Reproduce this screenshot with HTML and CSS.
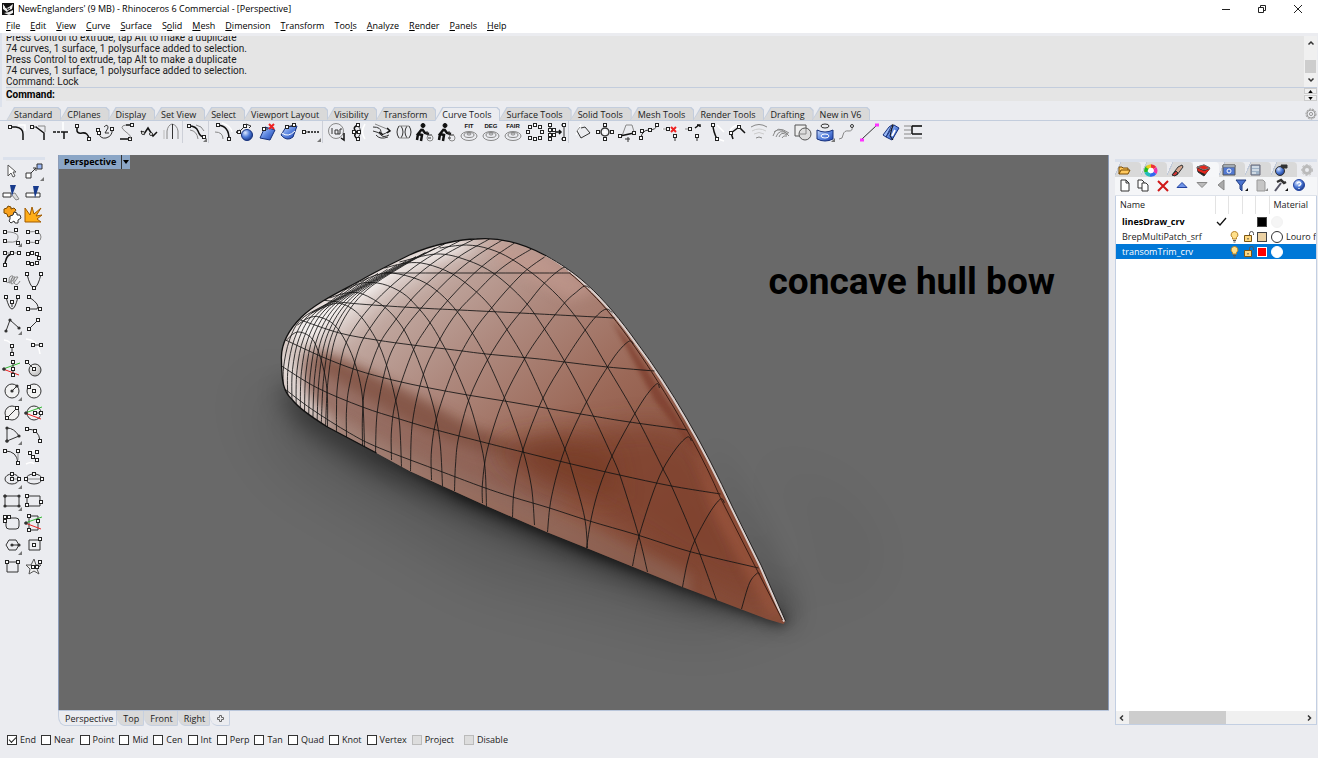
FILE: index.html
```html
<!DOCTYPE html>
<html lang="en">
<head>
<meta charset="utf-8">
<title>NewEnglanders' (9 MB) - Rhinoceros 6 Commercial - [Perspective]</title>
<link rel="stylesheet" href="styles.css">
</head>
<body>
<svg class="defs" aria-hidden="true">
  <defs>
    <marker id="sq" markerUnits="userSpaceOnUse" markerWidth="6" markerHeight="6" refX="3" refY="3"><rect x="1.5" y="1.5" width="3" height="3" fill="#fff" stroke="#222"/></marker>
    <marker id="dot" markerUnits="userSpaceOnUse" markerWidth="4" markerHeight="4" refX="2" refY="2"><circle cx="2" cy="2" r="1.6" fill="#333"/></marker>
    <linearGradient id="blue" x1="0" y1="0" x2="1" y2="1"><stop offset="0" stop-color="#cfe0ff"/><stop offset=".5" stop-color="#5c86e0"/><stop offset="1" stop-color="#1c3fa8"/></linearGradient>
    <radialGradient id="ball" cx=".35" cy=".3" r=".8"><stop offset="0" stop-color="#dbe7ff"/><stop offset=".5" stop-color="#4b79d8"/><stop offset="1" stop-color="#15307c"/></radialGradient>
    <radialGradient id="pearl" cx=".35" cy=".3" r=".8"><stop offset="0" stop-color="#fff"/><stop offset="1" stop-color="#b5b5b5"/></radialGradient>
  </defs>
</svg>

<header class="title-bar">
  <svg class="app-icon" viewBox="0 0 14 14"><rect x="1" y="1" width="12" height="12" fill="#111"/><path d="M2 2l3 4 3-1 4-3-1 5-3 1-2 2-4-3zM3 11l5-1 4-2v3l-4 2z" fill="#eee"/><path d="M4 3l1 3 2 0M6 8l3-2" stroke="#111" fill="none"/></svg>
  <h1>NewEnglanders' (9 MB) - Rhinoceros 6 Commercial - [Perspective]</h1>
  <div class="window-buttons">
    <button aria-label="Minimize"><svg viewBox="0 0 10 10"><path d="M1 5.500h8"/></svg></button>
    <button aria-label="Restore"><svg viewBox="0 0 10 10"><path d="M1.500 3.500h5v5h-5zM3.500 3.500v-2h5v5h-2"/></svg></button>
    <button aria-label="Close"><svg viewBox="0 0 10 10"><path d="M1 1l8 8M9 1l-8 8"/></svg></button>
  </div>
</header>

<nav class="menu-bar">
  <button><u>F</u>ile</button><button><u>E</u>dit</button><button><u>V</u>iew</button><button><u>C</u>urve</button><button><u>S</u>urface</button><button>S<u>o</u>lid</button><button><u>M</u>esh</button><button><u>D</u>imension</button><button><u>T</u>ransform</button><button>Too<u>l</u>s</button><button><u>A</u>nalyze</button><button><u>R</u>ender</button><button><u>P</u>anels</button><button><u>H</u>elp</button>
</nav>

<section class="command">
  <div class="history">
    <div class="history-text">
      <p>Press Control to extrude, tap Alt to make a duplicate</p>
      <p>74 curves, 1 surface, 1 polysurface added to selection.</p>
      <p>Press Control to extrude, tap Alt to make a duplicate</p>
      <p>74 curves, 1 surface, 1 polysurface added to selection.</p>
      <p>Command: Lock</p>
    </div>
    <div class="v-scroll">
      <button aria-label="Scroll up"><svg viewBox="0 0 8 8"><path d="M1.500 5.500L4 3l2.500 2.500"/></svg></button>
      <span class="v-thumb"></span>
      <button aria-label="Scroll down"><svg viewBox="0 0 8 8"><path d="M1.500 2.500L4 5l2.500-2.500"/></svg></button>
    </div>
  </div>
  <div class="prompt">
    <label for="cmd">Command:</label><input id="cmd" type="text">
    <div class="spin"><button aria-label="Previous"><svg viewBox="0 0 6 4"><path d="M0 4l3-4 3 4z"/></svg></button><button aria-label="Next"><svg viewBox="0 0 6 4"><path d="M0 0l3 4 3-4z"/></svg></button></div>
  </div>
</section>

<nav class="tool-tabs">
  <button class="tab">Standard</button><button class="tab">CPlanes</button><button class="tab">Display</button><button class="tab">Set View</button><button class="tab">Select</button><button class="tab">Viewport Layout</button><button class="tab">Visibility</button><button class="tab">Transform</button><button class="tab active">Curve Tools</button><button class="tab">Surface Tools</button><button class="tab">Solid Tools</button><button class="tab">Mesh Tools</button><button class="tab">Render Tools</button><button class="tab">Drafting</button><button class="tab">New in V6</button>
  <button class="gear" aria-label="Options"><svg viewBox="0 0 12 12"><circle cx="6" cy="6" r="5" stroke-dasharray="2 1"/><circle cx="6" cy="6" r="4"/><circle cx="6" cy="6" r="1.600"/></svg></button>
</nav>
<div class="toolbar" id="curve-tools"></div>

<main class="workspace">
  <div class="toolbox" id="toolbox"></div>

  <section class="view-column">
    <div class="viewport">
      <svg class="scene" viewBox="59 155 1050 555" preserveAspectRatio="xMidYMid slice">
        <defs>
          <clipPath id="hull-clip"><path d="M282 360C281 345 288 331 302 317C320 300 345 290 367 277C385 267 400 260 410 255C425 248 437 245 447 243C460 240 468 239 477 239C500 237 525 244 547 256C560 263 575 273 587 284C605 300 622 321 637 342C655 366 672 392 687 418C704 447 719 477 733 507C745 531 755 552 762 566L786 621L784 624L767 619L683 587L587 548L547 532L487 506L410 471L377 453L328 427C312 417 299 408 293 400C284 392 282 382 282 360Z"/></clipPath>
          <linearGradient id="hull-base" gradientUnits="userSpaceOnUse" x1="400" y1="270" x2="640" y2="560"><stop offset="0" stop-color="#c6b1aa"/><stop offset=".3" stop-color="#ae897e"/><stop offset=".6" stop-color="#9b6857"/><stop offset="1" stop-color="#864d3a"/></linearGradient>
          <filter id="b2" x="-20%" y="-20%" width="140%" height="140%"><feGaussianBlur stdDeviation="2"/></filter>
          <filter id="b5" x="-30%" y="-30%" width="160%" height="160%"><feGaussianBlur stdDeviation="6"/></filter>
          <filter id="b12" x="-40%" y="-40%" width="180%" height="180%"><feGaussianBlur stdDeviation="13"/></filter>
          <filter id="b30" x="-50%" y="-80%" width="200%" height="260%"><feGaussianBlur stdDeviation="28"/></filter>
        </defs>
        <rect x="-500" y="-500" width="2400" height="2000" fill="#696969"/>
        <path d="M250 390L300 400L560 520L800 610L870 560L760 460L850 520L830 590L700 630L480 575L290 465Z" fill="#000" opacity=".14" filter="url(#b30)"/>
        <path d="M278 390L300 385L420 440L600 520L788 612L780 624L690 602L580 562L470 516L370 470L300 425Z" fill="#000" opacity=".45" filter="url(#b12)"/>
        <path d="M370 445L600 540L788 618L782 625L590 554L460 499Z" fill="#000" opacity=".6" filter="url(#b5)"/>
        <path d="M710 440L790 590L796 624L780 620Z" fill="#000" opacity=".2" filter="url(#b12)"/>
        <g clip-path="url(#hull-clip)">
          <rect x="270" y="230" width="530" height="400" fill="url(#hull-base)"/>
          <path d="M480 236L550 258L600 290L570 300L500 262Z" fill="#c39a8f" opacity=".6" filter="url(#b5)"/>
          <path d="M275 372L285 330L360 275L460 234L500 238L450 258L385 295L340 335L310 345Z" fill="#efe9e7" opacity=".8" filter="url(#b12)"/>
          <path d="M285 338L300 318L370 275L450 240L475 245L400 272L345 308L312 340Z" fill="#fff" opacity=".7" filter="url(#b5)"/>
          <path d="M305 352L345 362L420 402L470 432L510 444L560 440L570 500L540 520L440 475L340 420L300 395Z" fill="#8b6154" opacity=".7" filter="url(#b5)"/>
          <path d="M312 350L335 356L375 374L430 403L470 425L510 442L520 458L470 448L425 430L370 400L320 370Z" fill="#7a4837" opacity=".6" filter="url(#b5)"/>
          <path d="M495 446L550 436L625 426L660 424L700 440L735 520L775 610L700 575L610 520L530 480Z" fill="#7f432d" opacity=".8" filter="url(#b12)"/>
          <path d="M500 448L560 440L610 450L620 500L560 480Z" fill="#70351d" opacity=".5" filter="url(#b12)"/>
          <path d="M275 375L330 412L400 445L480 480L560 514L640 550L690 575L690 600L590 560L480 515L380 465L275 410Z" fill="#937469" opacity=".45" filter="url(#b5)"/>
          <path d="M275 350L292 360L312 400L335 430L285 405Z" fill="#f0eceb" opacity=".75" filter="url(#b5)"/>
          <path d="M612 320L632 345L675 412L700 455L690 445L655 400Z" fill="#7c3b29" opacity=".7" filter="url(#b2)"/>
          <path d="M690 435L785 618L770 612L715 515Z" fill="#a65b43" opacity=".6" filter="url(#b5)"/>
          <path d="M540 250C560 260 575 272 587 284C605 300 622 321 637 342C655 366 672 392 687 418C704 447 719 477 733 507L762 566L786 621" fill="none" stroke="#d9cecb" stroke-width="5"/>
          <path id="isocurves" fill="none" stroke="#141414" stroke-width=".85"/>
        </g>
        <path d="M377 453L328 427C312 417 299 408 293 400C284 392 282 382 282 360C281 345 288 331 302 317C320 300 345 290 367 277C385 267 400 260 410 255C425 248 437 245 447 243C460 240 468 239 477 239C500 237 525 244 547 256" fill="none" stroke="#101010" stroke-width="1.300"/>
        <path d="M547 256C560 263 575 273 587 284C605 300 622 321 637 342C655 366 672 392 687 418C704 447 719 477 733 507L762 566L786 621" fill="none" stroke="#222" stroke-width="1"/>
        <path d="M570 273C583 283 602 303 610 313C628 335 646 362 656 378C680 415 705 460 721 498L758 571L783 620" fill="none" stroke="#3c1c12" stroke-width="1"/>
        <text class="caption" x="769" y="294">concave hull bow</text>
      </svg>
      <div class="view-title"><span>Perspective</span><button aria-label="Viewport menu"><svg viewBox="0 0 6 4"><path d="M0 0h6L3 4z"/></svg></button></div>
    </div>
    <nav class="view-tabs"><button class="active">Perspective</button><button>Top</button><button>Front</button><button>Right</button><button class="add" aria-label="New viewport"><svg viewBox="0 0 9 9"><path d="M3.500 1.500h2v2h2v2h-2v2h-2v-2h-2v-2h2z"/></svg></button></nav>
  </section>

  <aside class="panel">
    <nav class="panel-tabs" id="panel-tabs"></nav>
    <div class="panel-tools" id="panel-tools"></div>
    <div class="layers">
      <table>
        <colgroup><col class="c-name"><col class="c-a"><col class="c-b"><col class="c-a"><col class="c-b"><col></colgroup>
        <thead><tr><th>Name</th><th></th><th></th><th></th><th></th><th>Material</th></tr></thead>
        <tbody>
          <tr class="current"><td>linesDraw_crv</td><td><svg viewBox="0 0 13 13"><path d="M2 7l3 3 6-7" fill="none" stroke="#111" stroke-width="1.300"/></svg></td><td></td><td></td><td><i class="swatch black"></i></td><td><i class="mat faint"></i></td></tr>
          <tr><td>BrepMultiPatch_srf</td><td></td><td><svg viewBox="0 0 13 13"><use href="#bulb"/></svg></td><td><svg viewBox="0 0 13 13"><use href="#lock"/></svg></td><td><i class="swatch tan"></i></td><td><i class="mat"></i><span>Louro f</span></td></tr>
          <tr class="selected"><td>transomTrim_crv</td><td></td><td><svg viewBox="0 0 13 13"><use href="#bulb"/></svg></td><td><svg viewBox="0 0 13 13"><use href="#lock"/></svg></td><td><i class="swatch red"></i></td><td><i class="mat plain"></i></td></tr>
        </tbody>
      </table>
      <svg class="defs"><defs>
        <g id="bulb"><path d="M6.500 1.500a3.300 3.300 0 0 1 2 6v1.500h-4V7.500a3.300 3.300 0 0 1 2-6z" fill="#ffe08a" stroke="#b58125"/><path d="M5 10.500h3M5.500 12h2" stroke="#555"/></g>
        <g id="lock"><path d="M2.500 5.500h7v6h-7z" fill="#ffd880" stroke="#7a5512"/><path d="M7.500 5V3.500a2 2 0 0 1 4 0V5" fill="none" stroke="#555"/><path d="M5.500 8h1v1.500h-1z" fill="#333"/></g>
      </defs></svg>
      <div class="h-scroll">
        <button aria-label="Scroll left"><svg viewBox="0 0 8 8"><path d="M5 1.500L2.500 4 5 6.500"/></svg></button>
        <span class="h-track"><span class="h-thumb"></span></span>
        <button aria-label="Scroll right"><svg viewBox="0 0 8 8"><path d="M3 1.500L5.500 4 3 6.500"/></svg></button>
      </div>
    </div>
  </aside>
</main>

<footer class="osnap">
  <label><input type="checkbox" checked>End</label><label><input type="checkbox">Near</label><label><input type="checkbox">Point</label><label><input type="checkbox">Mid</label><label><input type="checkbox">Cen</label><label><input type="checkbox">Int</label><label><input type="checkbox">Perp</label><label><input type="checkbox">Tan</label><label><input type="checkbox">Quad</label><label><input type="checkbox">Knot</label><label><input type="checkbox">Vertex</label><label class="wide"><input type="checkbox" disabled>Project</label><label class="wide"><input type="checkbox" disabled>Disable</label>
</footer>
<script src="app.js"></script>
</body>
</html>
```
FILE: styles.css
```css
* { box-sizing: border-box; }
html, body { height: 100%; }
body {
  margin: 0;
  display: flex;
  flex-direction: column;
  background: #ebecf0;
  color: #1b1b1b;
  font: 9px/12px "Open Sans", "Noto Sans", sans-serif;
  overflow: hidden;
}
button { font: inherit; color: inherit; background: none; border: 0; padding: 0; margin: 0; white-space: nowrap; }
svg { display: block; }
p, h1 { margin: 0; font: inherit; }
.defs { position: absolute; width: 0; height: 0; }

.title-bar { display: flex; align-items: center; height: 18px; background: #fff; padding: 0 2px 0 1px; }
.app-icon { width: 14px; height: 14px; margin-right: 3px; }
.title-bar h1 { flex: 1; color: #000; }
.window-buttons { display: flex; }
.window-buttons button { width: 36px; height: 16px; display: grid; place-items: center; }
.window-buttons svg { width: 10px; height: 10px; fill: none; stroke: #222; }

.menu-bar { display: flex; gap: 10px; height: 15px; padding: 1px 6px 0; background: #fff; color: #000; }
.menu-bar u { text-underline-offset: 1px; }

.command { padding: 3px 1px 6px 4px; border-left: 2px solid #dde2ec; font-family: Roboto, "Noto Sans", sans-serif; font-size: 10px; }
.history { display: flex; height: 51px; background: #e5e5e5; overflow: hidden; align-items: flex-end; }
.history-text { flex: 1; line-height: 11px; }
.v-scroll { width: 13px; height: 100%; background: #f0f0f0; display: flex; flex-direction: column; justify-content: space-between; align-items: center; padding: 3px 0; }
.v-scroll svg, .h-scroll svg { width: 8px; height: 8px; fill: none; stroke: #333; stroke-width: 1.5; }
.v-thumb { width: 11px; height: 13px; background: #cdcdcd; margin-top: 10px; }
.prompt { display: flex; height: 14px; background: #e5e5e5; border-top: 1px solid #c3cddd; align-items: center; font-weight: 700; color: #000; }
.prompt input { flex: 1; min-width: 0; border: 0; background: none; font: inherit; padding: 0 4px; height: 12px; outline: 0; }
.spin { width: 13px; display: flex; flex-direction: column; gap: 1px; background: #f0f0f0; }
.spin button { height: 6px; border: 1px solid #ccc; display: grid; place-items: center; }
.spin svg { width: 5px; height: 3px; }

.tool-tabs { display: flex; height: 14px; padding: 0 1px 0 6px; border-bottom: 1px solid #c3cddd; }
.tab { position: relative; padding: 1px 7px 0 8px; z-index: 0; height: 14px; }
.tab::before, .tab::after {
  content: ""; position: absolute; z-index: -1; inset: 0 -2px 0 0;
  background: #c3cddd;
  clip-path: polygon(0 100%, 8px 0, calc(100% - 3px) 0, 100% 3px, 100% 100%);
}
.tab::after { inset: 1px -1px 1px 1px; background: #d9d9d9; }
.tab.active { z-index: 1; }
.tab.active::after { inset: 1px -1px 0 1px; background: #ebecf0; }
.gear { margin-left: auto; }
.gear svg { width: 12px; height: 12px; fill: none; stroke: #999; }

.toolbar { display: flex; height: 34px; padding: 0 0 0 6px; }
.toolbar .sep { width: 4px; height: 22px; border-left: 1px solid #cdd0d8; }
.tool { width: 22px; height: 22px; }
.tool svg { width: 22px; height: 22px; fill: none; stroke: #333; stroke-width: 1; overflow: visible; }
.n { marker-start: url(#sq); marker-end: url(#sq); }
.a { marker: url(#sq); }
.s { marker-start: url(#sq); }
.d { marker: url(#dot); }
.g { stroke: #888; }
.w { stroke: #fff; stroke-width: 1.5; }
.k { stroke: #111; stroke-width: 1.5; }
.o { stroke: none; }
.red { stroke: #e22; }
.green { stroke: #3b3; }
.tool text { font: 700 6px "Liberation Sans", sans-serif; fill: #111; stroke: none; }

.workspace { flex: 1; min-height: 0; display: flex; }
.toolbox { width: 58px; padding: 2px 5px 0 1px; display: grid; grid-template-columns: 22px 22px; align-content: start; }
.toolbox::before { content: ""; grid-column: 1 / 3; height: 3px; background: #dbe1ec; margin-left: 2px; }
.view-column { flex: 1; min-width: 0; display: flex; flex-direction: column; }
.viewport { position: relative; flex: 1; min-height: 0; border: 1px solid #8c9cb8; border-width: 0 1px 0 1px; background: #696969; }
.scene { width: 100%; height: 100%; }
.caption { font: 700 37px Roboto, sans-serif; fill: #000; }
.view-title { position: absolute; left: 0; top: 0; display: flex; height: 14px; background: #8ba6c6; color: #000; font: 700 9px/14px "Open Sans", sans-serif; }
.view-title span { padding: 0 5px; }
.view-title button { width: 9px; border-left: 1px solid #333; display: grid; place-items: center; }
.view-title svg { width: 6px; height: 4px; }
.view-tabs { display: flex; height: 17px; border-top: 1px solid #b9c6db; }
.view-tabs button { height: 15px; padding: 2px 4px 0 6px; background: #d9d9d9; border: 1px solid #c6d0e0; border-width: 0 1px 1px 0; border-bottom-left-radius: 7px 10px; border-bottom-right-radius: 2px; }
.view-tabs .active { padding-right: 3px; background: #ebecf0; border-left-width: 1px; }
.view-tabs .add { background: none; padding-top: 1px; }
.add svg { width: 9px; height: 9px; fill: none; stroke: #666; }

.panel { width: 209px; padding: 4px 1px 2px 6px; display: flex; flex-direction: column; }
.panel::before { content: ""; height: 3px; background: #dbe1ec; }
.panel-tabs { display: flex; height: 15px; }
.panel-tab { width: 26px; height: 15px; background: linear-gradient(115deg, #ebecf0 5px, #c0c9d8 5px, #c0c9d8 6px, #d9d9d9 6px); border-top-right-radius: 4px; }
.panel-tab.active { background: #f6f7f9; }
.panel-tab:last-child { width: 20px; background: none; margin-left: auto; }
.panel-tab svg { width: 16px; height: 14px; margin: 1px auto 0 2px; overflow: visible; fill: none; stroke: #333; }
.panel-tools { display: flex; justify-content: space-between; height: 19px; padding: 1px 10px 2px 2px; background: #f5f6f8; border-bottom: 1px solid #dde2ea; }
.panel-tools svg { width: 15px; height: 15px; fill: none; stroke: #333; overflow: visible; }
.layers { flex: 1; min-height: 0; display: flex; flex-direction: column; background: #fff; border: 1px solid #c3cfe2; border-top: 0; overflow: hidden; }
table { width: 100%; table-layout: fixed; border-collapse: collapse; }
.c-name { width: 99px; }
.c-a { width: 13px; }
.c-b { width: 14px; }
th, td { padding: 0; text-align: left; font-weight: 400; white-space: nowrap; overflow: hidden; }
th { height: 18px; border-right: 1px solid #e3e3e3; padding-left: 4px; }
th:last-child { border-right: 0; }
td { height: 15px; }
td:first-child { padding-left: 6px; }
td svg { width: 13px; height: 13px; }
td span { vertical-align: middle; }
.current td:first-child { font-weight: 700; color: #000; }
.selected td { background: #0078d7; color: #fff; }
.swatch { display: block; width: 10px; height: 10px; margin-left: 2px; border: 1px solid #444; }
.swatch.black { background: #000; }
.swatch.tan { background: #ecd2a4; }
.swatch.red { background: #f00; border-color: #fff; }
.mat { display: inline-block; vertical-align: middle; width: 12px; height: 12px; margin: 0 3px 0 2px; border: 1px solid #333; border-radius: 50%; background: #fff; }
.mat.faint { border-color: #f3f3f3; background: #f5f5f5; }
.mat.plain { border-color: #fff; }
.h-scroll { margin-top: auto; display: flex; align-items: center; height: 13px; background: #f0f0f0; padding: 0 3px 0 2px; gap: 3px; }
.h-track { flex: 1; height: 13px; }
.h-thumb { display: block; width: 56%; height: 13px; background: #cdcdcd; }

.osnap { display: flex; gap: 5px; height: 31px; padding: 7px 0 0 7px; }
.osnap label { display: flex; gap: 3px; height: 12px; align-items: center; }
.osnap input { appearance: none; position: relative; width: 10px; height: 10px; margin: 0; border: 1px solid #333; background: #fff; }
.osnap input:checked::after { content: ""; position: absolute; left: 1px; top: 1px; width: 6px; height: 3px; border: solid #222; border-width: 0 0 1px 1px; transform: rotate(-45deg); }
.osnap input:disabled { border-color: #bbb; background: #ddd; }
.osnap .wide { margin-right: 5px; }
```
FILE: app.js
```js
// Icon bodies, drawn on a 22 x 22 grid. null is a separator.
const corner = '<path class="o" fill="#777" d="M21 17v4h-4z"/>';
const rings = t => `<text x="11" y="7" text-anchor="middle">${t}</text><g class="g"><ellipse cx="11" cy="15" rx="8" ry="4.500"/><ellipse cx="11" cy="14" rx="5" ry="2.500"/><ellipse cx="11" cy="13" rx="2" ry="1"/></g>`;
const person = x => `<g stroke="#111"><circle cx="9" cy="4.500" r="2" fill="#111"/><path d="M8 8l-4 5 4 1-1 6M4 13l-1 6M8 8l3 4 4 1" stroke-width="2.500"/></g><path d="M13 10v4h5"/><circle cx="16" cy="17" r="3" class="g"/><path d="M${x} 17h3"/>`;
const dots = list => list.map(p => `<path class="s" d="M${p}v0"/>`).join('');
const curveTools = [
  ['Fillet curves', '<path class="s k" d="M4 6H10Q17 7 17 13V19"/><path class="w" d="M12 4h7v6"/>'],
  ['Chamfer curves', '<path class="s" d="M4 6h5"/><path class="k" d="M8 6l8 6v7"/><path class="g" d="M10 5l7 0v6"/>'],
  ['Connect', '<path class="w" d="M13 1v8M15 11h5"/><path class="k" d="M3 11h3M7 11h3M11 11h3v7M14 11h4"/>'],
  ['Adjustable blend', '<path class="n k" d="M5 5v5Q6 13 10 12Q16 11 17 18"/>'],
  ['Arc blend', '<path class="n" d="M5 12q1 6 7 5q7-2 6-9"/><path d="M10 6q4-4 4 1l-3 5h4"/>' + dots(['4 9'])],
  ['Match curve', '<path class="n k" d="M16 4H10M4 18h10"/><path class="g" d="M10 4q-8 1 0 7q6 4 4 7"/>'],
  ['Soft edit', '<path class="k" d="M3 10l3 3 4-6 5 8 4-4"/><circle cx="5" cy="12" r="1.500" fill="#fff"/><circle cx="13" cy="13" r="1.500" fill="#fff"/>'],
  ['Symmetry', '<path d="M7 18V10Q8 4 12 3Q17 4 18 10v8" class="g"/><path d="M12.500 3v15"/><path stroke="#bbb" d="M4 18v-9"/>'],
  null,
  ['Tween', '<path class="n k" d="M3 5q7 0 9 5q2 6 6 6"/><path class="g" d="M4 9q7 1 8 9M10 4q6 1 8 6"/>' + corner],
  null,
  ['Offset curve', '<path class="n k" d="M6 4Q17 5 17 18"/><path class="g" d="M3 11q8 0 8 7"/><path class="w" d="M10 2q9 3 10 9"/>'],
  ['Offset normal', '<circle cx="13" cy="14" r="5.500" fill="url(#ball)" stroke="#15307c"/><path class="n" d="M11 5l-6 6"/><path d="M4 13l-2-2 4-2M12 3l5 2-2 2"/>'],
  ['Curve from two views', '<path d="M4 17l5-11 10 3-5 10z" fill="url(#blue)" stroke="#15307c"/><path class="red" stroke-width="2" d="M13 3l5 5M18 3l-5 5"/><path class="s" d="M8 8h4"/>'],
  ['Project curves', '<path d="M3 14l5-8 11-1-4 11q-6 5-12-2z" fill="url(#blue)" stroke="#15307c"/><path d="M4 12q6 5 13-2" stroke="#fff"/><path class="n" d="M9 6l7-2"/>'],
  ['Extend curve', '<path class="s" d="M4 11h5"/><path class="k" stroke-dasharray="2 1" d="M8 11h11"/>' + corner],
  null,
  ['Rotate', '<circle class="g" cx="10" cy="10" r="7.500"/><path d="M6 7v6M9 9h3v4H9zM14 8v5h-2M14 8h2"/><path class="k" d="M18 12v7l-3-2"/>'],
  ['Seam', '<path class="w" d="M17 3q-5 8 0 15"/><path class="k" d="M10 4q-7 3-1 7q-5 4 1 7"/><path d="M10 5q5 5 0 12"/>' + dots(['10 4', '6 11', '11 11', '10 18'])],
  ['Direction', '<path d="M3 6q8 0 8 5t8-1M3 10q6 1 8 4t8 0M6 14q4 5 12 2"/><path class="k" d="M9 11l4 3M17 7l3 3-3 2"/><path class="g" d="M5 3l12 5"/>'],
  ['Cross sections', '<path d="M7 5q-4 6 0 12M9 5q4 6 0 12M15 5q-4 6 0 12M17 5q4 6 0 12"/><path class="g" d="M7 5h10M7 17h10"/>'],
  ['Rebuild', person(14)],
  ['Rebuild non-uniform', person(12)],
  ['Fit curve', rings('FIT')],
  ['Change degree', rings('DEG')],
  ['Fair curve', rings('FAIR')],
  ['Closed point editing', dots(['11 4', '6 6', '16 6', '4 11', '18 11', '6 17', '11 18', '16 17'])],
  ['Simplify', '<path d="M4 4v14M18 4v14M15 4h3M15 18h3"/><path class="k" d="M9 11h6m-2-2l2 2-2 2"/>' + dots(['4 4', '4 9', '4 14', '4 18', '8 9', '8 14', '18 4', '18 18'])],
  null,
  ['Convert', '<path class="w" d="M9 3L4 14"/><path d="M5 10l4 7 9-5-5-6-4 1"/><path class="g" d="M5 10l3-4"/>'],
  ['Circle control', '<path class="w" d="M4 11h15M11 4v15"/><circle cx="11" cy="11" r="4" stroke-width="1.500"/>' + dots(['11 4', '11 18', '4 11', '18 11'])],
  ['Add point', '<path class="g" d="M6 15L10 4h6l3 10"/><path class="n k" d="M4 15l14-3"/><path d="M9 18h5m-2-2v5"/>'],
  ['Insert knot', '<path d="M3 17Q4 9 11 9Q18 9 19 4"/>' + dots(['3 17', '4 10', '12 9', '19 4'])],
  ['Remove knot', '<path class="w" d="M2 8h17"/><path class="g" d="M3 8h3"/><path class="red" stroke-width="2" d="M11 6l5 5M16 6l-5 5"/><path class="s" d="M15 15v5"/>' + dots(['8 8'])],
  ['Insert kink', '<path class="g" d="M3 8h3"/><path class="k" d="M13 7l4-3M15 4h3v2"/><path class="s" d="M15 15v5"/>' + dots(['8 8'])],
  ['Blend', '<path class="w" d="M13 4l7 7M14 18l6 2"/><path class="n k" d="M9 4Q9 10 13 18"/>'],
  ['Arc segments', '<path class="w" d="M3 12q3-9 12-8"/><path class="k" d="M5 12l2 6M13 6l6 6M5 12L13 6"/>' + dots(['5 12', '13 6'])],
  ['Fade', '<path class="g" d="M3 6q8-5 16 0"/><path stroke="#ccc" d="M4 10q7-4 14 0M6 13q5-3 10 0"/><path class="g" d="M8 17q3-2 6 0"/>'],
  ['Pull', '<g class="g"><path d="M3 15q3-12 16-3M6 16q3-9 12-3M9 16q2-6 8-2M12 17q1-3 5-2M4 11q7-6 15 4"/></g>'],
  ['Boolean', '<path d="M3 4h11v11H3z" fill="#eee" stroke="#555"/><circle cx="13" cy="13" r="6" fill="#ddd" stroke="#555"/><path class="g" d="M8 13h6V8"/>'],
  ['Section', '<ellipse cx="11" cy="5" rx="4" ry="2"/><path d="M3 9q8 4 16 0v9q-8 4-16 0z" fill="url(#blue)" stroke="#15307c"/><ellipse cx="11" cy="15" rx="4" ry="2" stroke="#fff"/>' + corner],
  ['Lengthen', '<path class="g" d="M3 18Q7 18 7 14Q8 9 13 10Q17 10 16 6"/><circle cx="16" cy="5" r="1.500"/>'],
  ['Mid line', '<path d="M4 18L19 4"/><path stroke="#f3f" stroke-width="3" d="M2 19h4M17 4h4"/>'],
  ['Unroll', '<path d="M3 14l3 2L12 4 9 6z" fill="#9cbcf8" stroke="#15307c"/><path d="M6 16l6 3 7-12-5-3z" fill="url(#blue)" stroke="#15307c"/><path d="M13 3l-3 12M10 15l3 4" stroke="#111"/><path stroke="#fff" stroke-width="2" d="M15 9l-3 6"/>'],
  ['Text lines', '<path class="g" d="M2 5h18M2 9h7M2 13h7M2 17h18"/><path class="k" d="M10 5v8M10 5h10M10 13h10"/>'],
];
const axes = '<path class="green" d="M2 11L19 5"/><path class="red" d="M2 11l16 6"/><path class="d" d="M3 11h0"/>';
const circ = '<circle cx="11" cy="11" r="7" fill="#f2f2f2"/>';
const toolbox = [
  ['Select', '<path d="M7 5v11l3-3 2 4 2-1-2-4h3z" fill="#fff" stroke="#555"/>'],
  ['Points on', '<path d="M3 13h5v5H3z" fill="#fff"/><path d="M14 4h5v5h-5z" fill="#9bb8f5"/><path d="M8 13l5-5m-3 0h3v3"/>' + corner],
  ['Trim', '<path d="M2 11h8v4H2z" fill="#fff"/><path d="M10 12l4-1 4 6-3 1z" fill="#ddd" class="g"/><path class="o" fill="#173a8c" d="M9 3h6l-4 11z"/>'],
  ['Split', '<path d="M3 11h14v4H3z" fill="#fff"/><path class="o" fill="#173a8c" d="M10 4h6l-4 12z"/>'],
  ['Join', '<path d="M3 5l3-1 1-2 3 1 0 2 3-1 2 2-2 3 1 2-4 1-3 1-1-3-3-1z" fill="#f9a11b" stroke="#7a4a00"/><path d="M9 12l3-1 1-3 3 1 0 2 3 0 1 3-3 2 0 3-3 0-1-2-3 2-2-2 1-2z" fill="#fff"/>'],
  ['Explode', '<path d="M2 4l5 7 2-8 2 7 7-6-5 8 6-1-5 4 4 3H2z" fill="#ffae18" stroke="#a15b00"/>'],
  ['Control point curve', '<path class="g" d="M4 6h5q9 1 8 6t-9 4H4"/>' + dots(['4 6', '4 15', '15 4', '17 17']) + corner],
  ['Interpolate', '<path class="g" d="M5 6q13-2 13 5t-13 5"/>' + dots(['5 6', '14 6', '5 16', '14 16'])],
  ['Handle curve', '<path class="k" d="M4 18q0-10 6-12"/><path class="g" d="M5 5h13"/>' + dots(['4 5', '11 5', '18 5', '4 17'])],
  ['Sketch', '<path class="g" d="M5 6h9l3 5-3 5H5"/>' + dots(['5 6', '9 5', '14 6', '16 10', '14 15', '9 16', '5 15'])],
  ['Helix', '<path class="g" d="M4 11q5 5 8-5q-4-1-4 5t6-4q-4-1-4 5t7-5q-5-1-4 6q3 4 6-2"/>' + dots(['4 10', '15 18'])],
  ['Conic', '<path d="M4 4Q7 17 11 18Q15 17 18 4"/>' + dots(['4 4', '11 18', '18 4'])],
  ['Parabola', '<path class="n" d="M5 5Q11 29 17 5"/><path class="s" d="M11 10v5"/>'],
  ['Conic by points', '<path class="n" d="M6 5q12 8 8 12H5"/>' + dots(['17 17'])],
  ['Polyline', '<path class="d" d="M5 17L9 6l9 8"/>' + corner],
  ['Line', '<path class="n" d="M6 15l9-9"/>'],
  ['Perpendicular line', '<path class="w" d="M3 4q8 1 9 9"/><path class="n" d="M11 10v8"/>'],
  ['Tangent line', '<path class="w" d="M3 3q12 1 14 15"/><path class="n" d="M10 9h8"/>'],
  ['Line by normal', axes + '<path d="M12 4v13"/>' + dots(['12 4', '12 11', '12 17'])],
  ['Ball', '<circle cx="12" cy="12" r="6" fill="url(#pearl)"/><path class="n" d="M4 4l7 7"/>'],
  ['Circle', circ + '<path class="d" d="M11 11l5-5"/>' + corner],
  ['Circle deformable', circ + dots(['6 7', '11 11'])],
  ['Circle diameter', circ + '<path class="n" d="M6 16L16 6"/>'],
  ['Circle vertical', circ + axes + '<path class="n" d="M12 11h6"/>'],
  ['Arc', '<path class="d" d="M6 17V4q7 0 12 8z"/>' + corner],
  ['Arc from ends', '<path class="n" d="M4 5q12 0 13 12"/>' + dots(['12 7'])],
  ['Arc tangent', '<path class="n" d="M4 5Q16 5 17 17"/><path class="s g" d="M17 5v9"/>'],
  ['Arc fit', '<path class="w" d="M4 8q5-5 10-3M3 18q6-3 8 0"/>' + dots(['7 7', '14 6', '10 11', '14 14'])],
  ['Ellipse', '<ellipse cx="11" cy="11" rx="7" ry="5"/><path class="n g" d="M11 6v5h7"/>' + dots(['11 11']) + corner],
  ['Ellipse diameter', '<ellipse cx="11" cy="11" rx="8" ry="5"/><path class="n g" d="M3 11h16"/>' + dots(['11 6'])],
  ['Rectangle', '<path class="d" d="M4 6h14v10H4z"/>' + corner],
  ['Rectangle three points', '<path d="M4 6h13v10H4z"/>' + dots(['4 6', '4 15', '18 12'])],
  ['Rounded rectangle', '<rect x="5" y="6" width="13" height="11" rx="3"/>' + dots(['4 5', '8 5', '4 9'])],
  ['Rectangle vertical', '<path d="M6 4h9v14H6z"/>' + axes + dots(['6 4', '6 18', '15 9'])],
  ['Polygon', '<path d="M5 11l3-5h7l3 5-3 5H8z"/><path class="d" d="M11 11h7"/>' + corner],
  ['Square from centre', '<path d="M6 6h11v10H6z"/>' + dots(['11 11', '17 5'])],
  ['Square from edge', '<path d="M6 6h11v10H6z"/>' + dots(['6 6', '17 6'])],
  ['Star', '<path d="M3 9h5l3-6 2 6h5l-4 4 2 5-5-3-5 3 1-5z" stroke="#555" fill="#eee"/>' + dots(['10 11', '14 11', '17 6'])],
];
const panelTabs = [
  ['Properties', '<path d="M2 11V4h3l1 1h5v2M2 11l2-4h9l-2 4z" fill="#ffc95e" stroke="#7a4a00"/>'],
  ['Colour', '<circle cx="8" cy="7.500" r="4" fill="#fff" stroke="none"/><g stroke-width="3.500"><path stroke="#e33" d="M8 3a5 5 0 0 1 4 2"/><path stroke="#e3a" d="M12 5a5 5 0 0 1 0 5"/><path stroke="#36e" d="M12 10a5 5 0 0 1-5 2"/><path stroke="#2bb" d="M7 12a5 5 0 0 1-4-3"/><path stroke="#2b2" d="M3 9a5 5 0 0 1 2-5"/><path stroke="#ec2" d="M4 5a5 5 0 0 1 4-2"/></g>'],
  ['Materials', '<path d="M3 12l6-8 4-2 1 2-6 8z" fill="#d8a890"/><path d="M3 12l4-4 2 2-3 3z" fill="#c33"/>'],
  ['Layers', '<path d="M2 4l7-2 6 3-6 8-6-4z" fill="#222"/><path d="M2 4l7-2 6 3-6 2z" fill="#e3261c" stroke="#777"/><path d="M2 5l7 3 6-2-5 5-7-3z" fill="#e3261c" stroke="none"/>'],
  ['Rendering', '<path d="M2 2h12v10H2z" fill="#5278d0" stroke="#555"/><path d="M2 2h12v2H2z" fill="#cde" stroke="#777"/><circle cx="8" cy="8" r="2" stroke="#fff"/>'],
  ['Display', '<path d="M4 2h9v10H4z" fill="#9fb3c8" stroke="#667"/><path d="M5 4h7M5 7h7M5 10h4" stroke="#fff"/>'],
  ['Environment', '<circle cx="7" cy="8" r="4.500" fill="url(#ball)"/><path d="M8 2h6v3h-5z" fill="#333"/>'],
  ['Panel options', '<circle cx="8" cy="7" r="3.500" stroke="#bbb" stroke-width="3"/><circle cx="8" cy="7" r="5.500" stroke="#bbb" stroke-dasharray="2 2"/>'],
];
const panelTools = [
  ['New layer', '<path d="M4 2h5l3 3v8H4zM9 2v3h3" fill="#fff"/>'],
  ['New sublayer', '<path d="M2 2h4l2 2v6H2z" fill="#fff"/><path d="M6 5h4l2 2v6H6z" fill="#fff"/>'],
  ['Delete', '<path d="M2 3l10 10M12 3L2 13" stroke="#d01818" stroke-width="2"/>'],
  ['Move up', '<path d="M2 9.500h10l-5-5z" fill="#6f94e8" stroke="#2343a0"/>'],
  ['Move down', '<path d="M2 4.500h10l-5 5z" fill="#bbb" stroke="#888"/>'],
  ['Move to parent', '<path d="M10 2v10L4 7z" fill="#aaa" stroke="#888"/>'],
  ['Filter', '<path d="M2 2h10L8 7v6l-2-2V7z" fill="#4b74cf" stroke="#203a80"/><path class="o" fill="#111" d="M14 10v3h-3z"/>'],
  ['Report', '<path d="M4 2h6l2 2v9H4z" fill="#c6c6c6" stroke="#999"/><path class="o" fill="#888" d="M15 10v3h-3z"/>'],
  ['Tools', '<path d="M4 4l4-2 3 3 2-1" stroke-width="2.500"/><path d="M8 5l-6 8" stroke-width="2" stroke="#556"/><path class="o" fill="#111" d="M15 10v3h-3z"/>'],
  ['Help', '<circle cx="7" cy="7" r="5.500" fill="url(#ball)" stroke="#2343a0"/><path d="M5 5.500q2-3 4 0 0 1.500-2 2v1M7 10v1" stroke="#fff" stroke-width="1.300"/>'],
];

function fill(id, items, box, cls) {
  document.getElementById(id).innerHTML = items.map(item => item
    ? `<button class="${cls}" aria-label="${item[0]}"><svg viewBox="0 0 ${box}">${item[1]}</svg></button>`
    : '<span class="sep"></span>').join('');
}
fill('curve-tools', curveTools, '22 22', 'tool');
fill('toolbox', toolbox, '22 22', 'tool');
fill('panel-tabs', panelTabs, '16 14', 'panel-tab');
fill('panel-tools', panelTools, '15 15', 'panel-tool');
document.getElementById('panel-tabs').children[3].classList.add('active');

// Smooth curve through a list of x, y pairs (Catmull-Rom to Bezier).
function through(line) {
  const v = line.trim().split(/[ ,]+/).map(Number), p = [];
  for (let i = 0; i < v.length; i += 2) p.push([v[i], v[i + 1]]);
  let d = `M${p[0]}`;
  for (let i = 0; i < p.length - 1; i++) {
    const a = p[i - 1] || p[i], b = p[i], c = p[i + 1], e = p[i + 2] || c;
    d += `C${b[0] + (c[0] - a[0]) / 6},${b[1] + (c[1] - a[1]) / 6} ${c[0] - (e[0] - b[0]) / 6},${c[1] - (e[1] - b[1]) / 6} ${c[0]},${c[1]}`;
  }
  return d;
}
const iso = [
  // along the hull
  '385,273 540,273 571,273',
  '322,300 360,304 420,308 460,310 540,314 615,318',
  '301,320 340,333 377,340 413,345 455,350 487,354 540,359 565,362 608,367 655,371',
  '286,340 323,357 357,370 393,380 430,388 468,395 505,401 540,407 593,416 630,422 688,430',
  '282,366 318,388 363,407 400,419 437,430 487,443 523,452 572,464 620,475 672,486 721,494',
  '284,388 312,409 350,433 380,448 443,472 483,487 513,497 550,508 590,521 638,535 692,552 759,568',
  // falling to the right
  '440,248 467,245 490,249 512,259 540,279 565,303 587,332 608,367 635,413 663,468 672,486 695,540 717,600',
  '400,262 437,254 467,260 495,274 525,301 545,329 565,361 587,402 612,455 622,480 639,535 648,572',
  '385,268 407,263 427,264 453,274 477,292 494,310 509,332 525,359 543,397 565,448 574,476 585,517 588,548',
  '360,282 377,275 393,273 420,280 440,293 458,312 474,335 488,360 505,398 516,427 524,452 532,487 535,525',
  '345,290 363,283 383,284 403,293 417,306 430,322 442,342 455,367 468,398 477,427 485,463 487,506',
  '330,298 347,293 363,294 385,307 402,326 413,347 423,372 431,396 437,420 441,447 443,486',
  '312,313 330,305 343,304 360,315 377,340 387,365 395,395 400,423 402,467',
  '298,325 309,318 320,317 335,325 347,343 356,365 362,390 364,415 365,447',
  '287,340 298,332 312,338 320,355 326,378 328,400 328,427',
  // falling to the left
  '760,575 758,573 750,583 742,609',
  '725,503 721,499 710,513 695,541 688,562 683,587',
  '692,441 688,437 677,448 663,470 652,497 639,538 633,566',
  '660,388 657,384 645,398 630,423 612,457 600,487 592,517 587,548',
  '634,344 630,341 620,350 608,367 587,402 565,450 552,497 548,532',
  '613,313 607,309 598,315 585,331 565,361 543,399 524,448 515,487 513,517',
  '590,288 585,286 577,292 565,303 545,329 525,359 503,402 488,449 483,483 483,503',
  '568,270 563,268 545,283 527,305 507,330 488,360 470,398 459,438 456,465 455,491',
  '545,257 527,270 510,287 492,308 473,333 455,367 438,415 432,450 432,480',
  '532,249 512,261 495,274 477,292 458,312 441,338 424,374 413,422 411,471',
  '515,243 493,258 475,273 457,291 441,309 427,328 413,352 397,398 392,430 392,460',
  '503,240 480,254 458,271 438,290 420,310 403,332 388,362 378,410 376,453',
  '490,239 462,255 438,274 414,297 396,320 379,346 366,385 363,415 363,445',
  '475,239 445,255 418,275 393,299 374,323 360,347 350,385 347,410 347,437',
  '460,241 428,258 402,277 376,301 356,326 344,350 338,385 337,410 337,432',
];
for (let i = 0; i < 11; i++) {
  const t = i / 10, s = 1 - t;
  iso.push(`${445 - 95 * t},${244 + 42 * t} ${405 - 75 * t},${265 + 37 * t} ${363 - 61 * t},${294 + 25 * t} ${338 - 48 * t},${332 + 8 * t} ${329 - 45 * t},${376 - 8 * t} ${326 - 42 * t},${426 - 34 * t + 8 * s * t}`);
}
document.getElementById('isocurves').setAttribute('d', iso.map(through).join(''));
```
